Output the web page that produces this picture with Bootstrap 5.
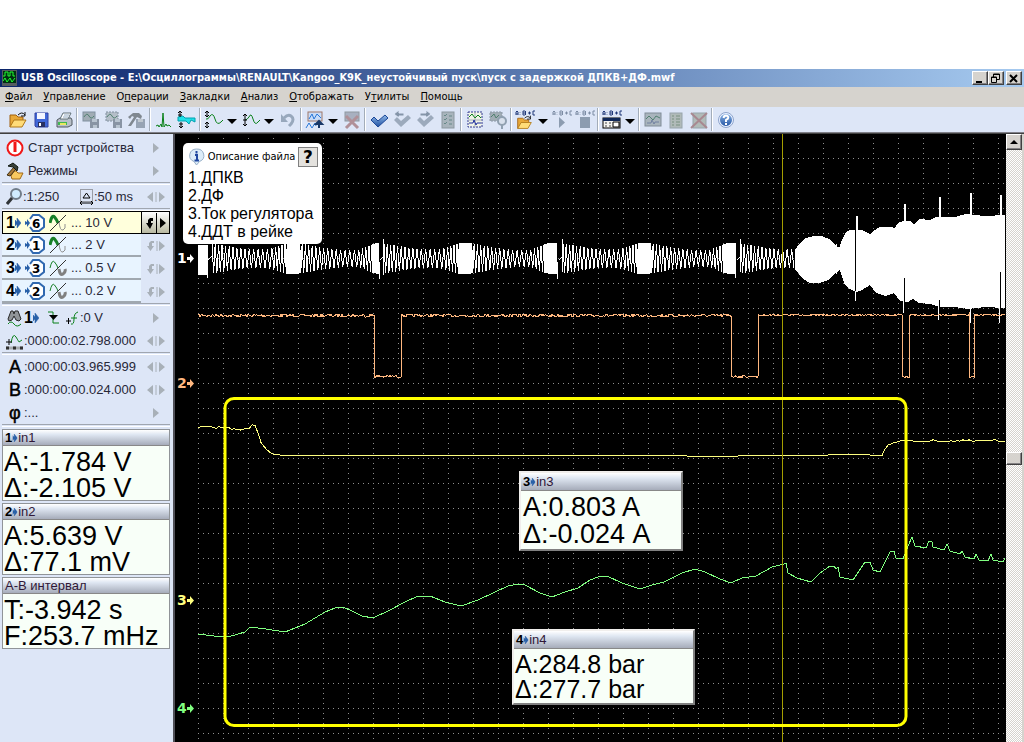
<!DOCTYPE html>
<html lang="ru">
<head>
<meta charset="utf-8">
<meta name="viewport" content="width=device-width, initial-scale=1">
<title>USB Oscilloscope</title>
<link href="https://cdn.jsdelivr.net/npm/bootstrap@5.3.0/dist/css/bootstrap.min.css" rel="stylesheet">
<style>
  :root { --face:#d6d3ce; --pane:#dde6f7; --ui:"DejaVu Sans Condensed","DejaVu Sans",sans-serif; }
  body { background:#fff; font:11px/14px var(--ui); color:#000; overflow:hidden; }
  button { border:0; background:none; padding:0; color:inherit; font:inherit; }
  svg { display:block; flex:none; }
  .app { height:100vh; padding-top:69px; }
  .titlebar { height:18px; background:linear-gradient(90deg,#0a246a,#a6caf0); color:#fff; padding:0 2px; }
  .titlebar h1 { font:bold 11px/18px var(--ui); margin:0; white-space:nowrap; overflow:hidden; }
  .winbtn { width:16px; height:14px; background:var(--face); border:1px solid; border-color:#fff #404040 #404040 #fff; box-shadow:inset -1px -1px #848284; }
  .winbtn-close { margin-left:2px; }
  .menubar { height:20px; background:var(--face); padding-left:5px; gap:11px; }
  .menubar button { line-height:20px; }
  .tools { height:25px; background:var(--pane); padding-left:6px; }
  .tools button { width:23px; height:25px; display:flex; align-items:center; justify-content:center; }
  .tools button.drop { width:14px; }
  .vsep { width:2px; height:23px; margin:0 1px; background:#a3adb9; border-right:1px solid #fff; flex:none; }
  .edge { height:2px; background:#808088; border-bottom:1px solid #404040; }
  .side { width:175px; flex:none; background:var(--pane); border-right:2px solid #505058; padding:2px 3px 0 2px; font:13px/23px "Liberation Sans",sans-serif; color:#282838; }
  .line-item { height:23px; }
  .line-item .main { text-align:left; white-space:nowrap; height:23px; }
  .nudge { width:29px; flex:none; display:flex; align-items:center; justify-content:center; }
  .hsep { height:3px; border-top:1px solid #a0a6b0; border-bottom:1px solid #fff; background:var(--pane); }
  .hsep-last { margin-bottom:2px; }
  .chan .main { width:139px; background:#e8f4ff; border-bottom:2px solid #a0a8b0; padding-left:4px; }
  .chan.active .main { background:#ffffdc; border:1px solid #000; border-right:0; padding-left:3px; }
  .chan.active .nudge { background:linear-gradient(#fff,#b8b8a0); border:1px solid #000; height:23px; }
  .num { font:bold 16px/20px "Liberation Sans",sans-serif; color:#000; }
  .big { font:18px/22px "Liberation Sans",sans-serif; color:#000; -webkit-text-stroke:.5px #000; width:18px; padding-left:3px; }
  .meter { background:#f8fff8; border:1px solid #909498; color:#000; margin-bottom:2px; }
  .meter header { height:16px; background:linear-gradient(#fff,#dfe7f2 30%,#a6acba); border-bottom:1px solid #888; font:13px/15px "Liberation Sans",sans-serif; color:#301838; padding-left:2px; display:flex; align-items:center; }
  .meter header b { color:#000; }
  .meter .vals { font:27px/26px "Liberation Sans",sans-serif; padding:3px 0 0 1px; white-space:nowrap; height:54px; }
  .float-box { position:absolute; border:2px solid; border-color:#f0eeec #808080 #808080 #f0eeec; margin:0; }
  .float-box header { height:18px; line-height:17px; }
  .in3 { left:344px; top:337px; width:164px; height:80px; }
  .in3 .vals { line-height:27px; padding-top:3px; padding-left:2px; }
  .in4 { left:337px; top:495px; width:183px; height:76px; }
  .in4 .vals { font-size:25px; line-height:25px; }
  .scope { background:#000; }
  .plot { position:absolute; inset:0; width:100%; height:100%; }
  .tag { position:absolute; left:2px; height:14px; font:bold 14px/14px "DejaVu Sans",sans-serif; display:flex; align-items:center; }
  .tag1 { top:117px; color:#fff; }
  .tag2 { top:242px; color:#ffb880; }
  .tag3 { top:459px; color:#ffff80; }
  .tag4 { top:567px; color:#80ff80; }
  .note { position:absolute; left:8px; top:9px; width:139px; height:101px; background:#fff; border-radius:5px; padding:4px 4px 0 5px; }
  .note ol { list-style:none; margin:2px 0 0; padding:0; font:16px/18px "Liberation Sans",sans-serif; white-space:nowrap; }
  .ask { width:20px; height:20px; border:1px solid #808080; background:#e4e2de; font:bold 17px/17px "DejaVu Sans",sans-serif; text-align:center; }
  .track { width:16px; flex:none; background:repeating-conic-gradient(#d6d3ce 0 25%,#fff 0 50%) 0 0/2px 2px; }
  .track button { width:16px; height:16px; background:var(--face); border:1px solid; border-color:#fff #404040 #404040 #fff; box-shadow:inset -1px -1px #848284; display:flex; align-items:center; justify-content:center; }
  .thumb { position:absolute; left:0; top:318px; }
  .track button.thumb { height:13px; }
  .rim { width:2px; flex:none; background:var(--face); }
</style>
</head>
<body>
<svg width="0" height="0" class="position-absolute" aria-hidden="true">
  <defs>
    <linearGradient id="blue" x1="0" y1="0" x2="0" y2="1"><stop offset="0" stop-color="#8fb8e8"/><stop offset="1" stop-color="#1f50a0"/></linearGradient>
    <symbol id="tri" viewBox="0 0 10 5"><path d="M0 0H10L5 5Z"/></symbol>
    <symbol id="arr" viewBox="0 0 6 10"><path d="M0 2l2 2V0l4 5-4 5V6l-2 2z" fill="#2860a8" stroke="#2860a8" stroke-width=".5"/></symbol>
    <symbol id="right" viewBox="0 0 6 10"><path d="M0 0L6 5L0 10Z" fill="#a8b0b8"/></symbol>
    <symbol id="both" viewBox="0 0 18 10"><path d="M6 0L0 5L6 10ZM12 0L18 5L12 10Z" fill="#a8b0b8"/><path d="M9 0V10" stroke="#a8b0b8"/></symbol>
    <symbol id="jump" viewBox="0 0 18 10"><path d="M7 0H4L2 2V5H0L3.500 10L7 5H5V2H7ZM12 0L18 5L12 10Z" fill="#a8b0b8"/><path d="M10 0V10" stroke="#a8b0b8"/></symbol>
    <symbol id="folder" viewBox="0 0 20 20"><path d="M2 17V5H8L10 7H15V10" fill="#e8a838" stroke="#a06010"/><path d="M2 17L6 10H18L14 17Z" fill="#ffdc78" stroke="#b07818"/><path d="M10 5Q14 1 17 5M17 2V6H13" fill="none" stroke="#111"/></symbol>
    <symbol id="check" viewBox="0 0 20 20"><path d="M2 10L5 7L9 11L16 5L19 8L9 17Z"/></symbol>
    <symbol id="abc" viewBox="0 0 20 6"><path d="M1 5V2L2 1L3 2V5M1 4H3M5 2V2.500M5 4V4.500M8 1V5H10L11 4L10 3H8M10 3L11 2L10 1H8M13 3H16M14.500 1.500V4.500M20 1H18V5H20" fill="none" stroke="currentColor"/></symbol>
    <symbol id="wavehi" viewBox="0 0 18 18"><path d="M1 9Q3 0 5.500 3T9 9" fill="none" stroke="#188028" stroke-width="3"/><path d="M10 8Q11 17 14 16T16 10" fill="none" stroke="#909090"/><path d="M1 17L17 1" stroke="#333"/></symbol>
    <symbol id="wavelo" viewBox="0 0 18 18"><path d="M1 9Q3 0 5.500 3T9 9" fill="none" stroke="#188028"/><path d="M10 10Q11 17 14 15T16 10" fill="none" stroke="#808080" stroke-width="3"/><path d="M1 17L17 1" stroke="#333"/></symbol>
    <symbol id="oct" viewBox="0 0 20 18"><path d="M5 5L8 1H14L19 5V13L14 17H8L5 13" fill="#fff" stroke="#3068b0" stroke-width="2"/><path d="M0 7L2 8V5L5 9L2 13V10L0 11Z" fill="#2860a8"/></symbol>
  </defs>
</svg>

<main class="app d-flex flex-column">
  <div class="titlebar d-flex align-items-center gap-1">
    <svg width="15" height="16" viewBox="0 0 15 16"><rect width="15" height="16" fill="#555c60"/><rect x="1" y="1" width="13" height="12" fill="#003010"/><path d="M1 6H3V2H6V6H8V2H11V6H13M1 11L3 8L5 12L8 8L10 12L13 8" fill="none" stroke="#20ff30"/></svg>
    <h1 class="flex-grow-1">USB Oscilloscope - E:\Осциллограммы\RENAULT\Kangoo_K9K_неустойчивый пуск\пуск с задержкой ДПКВ+ДФ.mwf</h1>
    <div class="d-flex">
      <button class="winbtn" aria-label="Свернуть"><svg width="13" height="11"><rect x="3" y="8" width="6" height="2"/></svg></button>
      <button class="winbtn" aria-label="Восстановить"><svg width="13" height="11"><path d="M4.500 4V1H10.500V6.500H8M4 1.500H11M2.500 4V9.500H7.500V4ZM2 4.500H8" fill="none" stroke="#000"/></svg></button>
      <button class="winbtn winbtn-close" aria-label="Закрыть"><svg width="13" height="11"><path d="M3 2L10 9M10 2L3 9" stroke="#000" stroke-width="2"/></svg></button>
    </div>
  </div>

  <nav class="menubar d-flex" aria-label="Меню">
    <button><u>Ф</u>айл</button><button><u>У</u>правление</button><button>О<u>п</u>ерации</button><button><u>З</u>акладки</button><button><u>А</u>нализ</button><button><u>О</u>тображать</button><button>У<u>т</u>илиты</button><button><u>П</u>омощь</button>
  </nav>

  <div class="tools d-flex align-items-center" role="toolbar" aria-label="Инструменты">
    <button aria-label="Открыть"><svg width="20" height="20"><use href="#folder"/></svg></button>
    <button aria-label="Сохранить"><svg width="20" height="20"><path d="M4 3H17V17H5L4 16Z" fill="#4068d8" stroke="#3040a0"/><rect x="6" y="3" width="8" height="6" fill="#f4f6ff"/><rect x="7" y="12" width="7" height="5" fill="#283060"/><rect x="8" y="13" width="2" height="3" fill="#fff"/></svg></button>
    <button aria-label="Печать"><svg width="20" height="20"><path d="M3 10L6 8H17L18 10V15L14 17H3Z" fill="#b8c0c8" stroke="#505860"/><path d="M6 9L9 3H17L14 9Z" fill="#fff" stroke="#607078"/><path d="M9 7H14M10 5H15" stroke="#90a8c0"/><path d="M4 12H13V15H4Z" fill="#40b850"/><path d="M6 13H12V15H6Z" fill="#e8e860"/></svg></button>
    <span class="vsep"></span>
    <button aria-label="Сохранить сигнал" disabled><svg width="20" height="20"><rect x="2" y="2" width="12" height="9" fill="#a0acb4" stroke="#8090a0"/><path d="M3 7Q6 2 8 6T13 6" fill="none" stroke="#508070"/><rect x="9" y="9" width="9" height="9" fill="#8894a4"/><path d="M11 9H16V12H11ZM12 15H16V18H12Z" fill="#b8c4d0"/></svg></button>
    <button aria-label="Сохранить фрагмент" disabled><svg width="20" height="20"><rect x="2" y="2" width="12" height="9" fill="#b4bec8" stroke="#8090a0" stroke-dasharray="2 1"/><path d="M3 7Q6 2 8 6T13 6" fill="none" stroke="#508070"/><rect x="9" y="9" width="9" height="9" fill="#8894a4"/><path d="M11 9H16V12H11ZM12 15H16V18H12Z" fill="#b8c4d0"/></svg></button>
    <button aria-label="Настройки сохранения" disabled><svg width="20" height="20"><path d="M1 7L6 3H12L15 6L14 9L10 7L4 16H1L7 7L5 6L3 9Z" fill="#808890"/><rect x="9" y="9" width="9" height="9" fill="#98a4b4"/><path d="M11 9H16V12H11Z" fill="#c0c8d0"/></svg></button>
    <span class="vsep"></span>
    <button aria-label="Спектр"><svg width="20" height="20"><path d="M2 16L4 15L5 17L7 14L8 17L9 3L10 17L12 14L13 16L15 15L17 17" fill="none" stroke="#088018"/></svg></button>
    <button aria-label="Диапазон"><svg width="20" height="20"><path d="M1 7L6 6L8 8H18V12L14 10L12 14L9 11H1Z" fill="#20e0e8" stroke="#00a0b0"/><path d="M3 1V7M1 3L3 1L5 3M1 5H5M4 12V18M2 14H6M2 16L4 18L6 16" fill="none" stroke="#000"/></svg></button>
    <span class="vsep"></span>
    <button aria-label="Масштаб по вертикали"><svg width="20" height="20"><path d="M2 9Q4 10 6 6Q9 2 11 9T17 12L19 10" fill="none" stroke="#088018"/><path d="M3 1V7M1 3L3 1L5 3M1 5L3 7L5 5M3 12V18M1 14L3 12L5 14M1 16L3 18L5 16" fill="none" stroke="#000"/></svg></button>
    <button class="drop" aria-label="Варианты масштаба"><svg width="10" height="5" class="mt-1"><use href="#tri"/></svg></button>
    <button aria-label="Смещение"><svg width="20" height="20"><path d="M4 10Q6 10 8 7Q10 2 12 9T17 12L19 10" fill="none" stroke="#088018"/><path d="M4 4V10M2 6L4 4L6 6M4 10V16M2 14L4 16L6 14M2 10H6" fill="none" stroke="#000"/></svg></button>
    <button class="drop" aria-label="Варианты смещения"><svg width="10" height="5" class="mt-1"><use href="#tri"/></svg></button>
    <button aria-label="Отменить" disabled><svg width="20" height="20"><path d="M6 8Q10 4 13 6Q17 9 13 14L11 16" fill="none" stroke="#98a8bc" stroke-width="3"/><path d="M3 4V12H10Z" fill="#98a8bc"/></svg></button>
    <span class="vsep"></span>
    <button aria-label="Вид"><svg width="20" height="20"><rect x="3" y="2" width="14" height="9" fill="#c8dcf8" stroke="#a07868"/><path d="M4 9L7 4L9 9L12 4L16 8" fill="none" stroke="#2878d8"/><path d="M1 18L4 13L7 18L10 13L11 16" fill="none" stroke="#2878d8"/><path d="M14 18V12M11 14L14 11L17 14Z" fill="#183868" stroke="#183868" stroke-width="2"/></svg></button>
    <button class="drop" aria-label="Варианты вида"><svg width="10" height="5" class="mt-1"><use href="#tri"/></svg></button>
    <button aria-label="Убрать вид" disabled><svg width="20" height="20"><rect x="3" y="2" width="14" height="9" fill="#a8b0c0" stroke="#9098a0"/><path d="M4 6L16 18M16 6L4 18" stroke="#b09098" stroke-width="3"/></svg></button>
    <span class="vsep"></span>
    <button aria-label="Закладка"><svg width="20" height="20" fill="url(#blue)" stroke="#1c4898"><use href="#check"/></svg></button>
    <button aria-label="Предыдущая закладка" disabled><svg width="20" height="20" fill="#9caabc"><use href="#check"/><path d="M2 4L7 0V3H12V6H7V8Z" fill="#8494a8" stroke="#dde6f7"/></svg></button>
    <button aria-label="Следующая закладка" disabled><svg width="20" height="20" fill="#9caabc"><use href="#check"/><path d="M16 4L11 0V3H5V6H11V8Z" fill="#8494a8" stroke="#dde6f7"/></svg></button>
    <button aria-label="Список закладок" disabled><svg width="20" height="20"><rect x="4" y="2" width="12" height="16" fill="#a8b4bc" stroke="#8c98a0"/><path d="M6 5L7 6L9 4M6 9L7 10L9 8M6 13L7 14L9 12M11 6H14M11 10H14M11 14H14" fill="none" stroke="#688"/></svg></button>
    <span class="vsep"></span>
    <button aria-label="Выделить"><svg width="20" height="20"><rect x="3" y="2" width="14" height="15" fill="#f0f4e8" stroke="#303890" stroke-dasharray="2 1"/><path d="M3 10H17M10 2V17" stroke="#a8b0b8"/><path d="M4 7L7 4L10 8L13 5L16 8" fill="none" stroke="#088018"/><path d="M4 13H8L9 10L11 15L12 13H16" fill="none" stroke="#2030a0"/></svg></button>
    <button aria-label="Увеличить выделение" disabled><svg width="20" height="20"><rect x="2" y="2" width="12" height="9" fill="#a0acb4" stroke="#8c98a8" stroke-dasharray="2 1"/><path d="M3 7L6 4L8 8L11 5" fill="none" stroke="#508070"/><circle cx="14" cy="11" r="4" fill="#d8e0ec" stroke="#90a0b0" stroke-width="2"/><path d="M14 15V19" stroke="#90a0b0" stroke-width="2"/></svg></button>
    <span class="vsep"></span>
    <button aria-label="Открыть сценарий"><svg width="20" height="20"><use href="#abc" width="20" height="6" color="#203878"/><svg x="1" y="4" width="17" height="17"><use href="#folder" width="17" height="17"/></svg></svg></button>
    <button class="drop" aria-label="Недавние сценарии"><svg width="10" height="5" class="mt-1"><use href="#tri"/></svg></button>
    <button aria-label="Запустить сценарий" disabled><svg width="20" height="20"><use href="#abc" width="20" height="6" color="#7c8ca4"/><path d="M7 7V18L13 12.500Z" fill="#8c9cb0"/></svg></button>
    <button aria-label="Остановить сценарий" disabled><svg width="20" height="20"><use href="#abc" width="20" height="6" color="#7c8ca4"/><rect x="5" y="7" width="10" height="11" fill="#8c9cb0"/></svg></button>
    <span class="vsep"></span>
    <button aria-label="Окна анализа"><svg width="20" height="20"><use href="#abc" width="20" height="6" color="#203878"/><rect x="1" y="8" width="17" height="10" fill="#f4f4f0" stroke="#000"/><path d="M1 9.500H18" stroke="#102858" stroke-width="3"/><path d="M3 13H5M7 13H9M3 16H5M7 16H9" stroke="#444"/><path d="M11 12H17V17H11Z" fill="#fff" stroke="#000"/></svg></button>
    <button class="drop" aria-label="Список окон"><svg width="10" height="5" class="mt-1"><use href="#tri"/></svg></button>
    <span class="vsep"></span>
    <button aria-label="Отчёт" disabled><svg width="20" height="20"><rect x="2" y="3" width="16" height="13" fill="#a8b4bc" stroke="#808c98"/><path d="M3 9L6 6L10 10L13 6L17 8" fill="none" stroke="#508070"/><path d="M4 13H8L9 10L11 14L12 12H16" fill="none" stroke="#7080a0"/></svg></button>
    <button aria-label="Страница" disabled><svg width="20" height="20"><rect x="4" y="3" width="12" height="15" fill="#b0bab8" stroke="#98a4ac"/><path d="M6 6H8M6 9H8M6 12H8M6 15H8M10 6H14M10 9H14M10 12H14M10 15H14" stroke="#789080"/></svg></button>
    <button aria-label="Удалить отчёт" disabled><svg width="20" height="20"><rect x="4" y="3" width="13" height="15" fill="#b0bab8" stroke="#98a4ac"/><path d="M2 3L18 18M18 3L2 18" stroke="#a88890" stroke-width="2"/></svg></button>
    <span class="vsep"></span>
    <button aria-label="Справка"><svg width="20" height="20"><circle cx="10" cy="10" r="7" fill="url(#blue)" stroke="#e8f0ff" stroke-width="2"/><circle cx="10" cy="10" r="7.500" fill="none" stroke="#5070a8" stroke-width=".6"/><path d="M7.500 8Q8 5.500 10 5.500Q13 6 12 8.500L10 10V12M10 13V15" fill="none" stroke="#fff" stroke-width="2"/></svg></button>
  </div>
  <div class="edge"></div>

  <div class="d-flex flex-grow-1">
    <aside class="side">
      <div class="line-item d-flex"><button class="main d-flex flex-grow-1 align-items-center gap-1 ps-1"><svg width="18" height="18"><circle cx="9" cy="9" r="7.500" fill="#fff" stroke="#f01818" stroke-width="2"/><path d="M9 3V13" stroke="#f01818" stroke-width="3"/></svg><span>Старт устройства</span></button><button class="nudge" aria-label="Подменю запуска"><svg width="6" height="10"><use href="#right"/></svg></button></div>
      <div class="line-item d-flex"><button class="main d-flex flex-grow-1 align-items-center gap-1 ps-1"><svg width="18" height="18"><path d="M5 14L8 9H10L12 11H17L14 17H6Z" fill="#f8c860" stroke="#a06818"/><path d="M1 13L8 5L10 7L4 14Z" fill="#a87838" stroke="#403010"/><path d="M2 4L7 1L12 5L11 9L7 5Z" fill="#384038" stroke="#101810"/></svg><span>Режимы</span></button><button class="nudge" aria-label="Подменю режимов"><svg width="6" height="10"><use href="#right"/></svg></button></div>
      <div class="hsep"></div>
      <div class="line-item d-flex"><button class="main d-flex align-items-center flex-grow-1 ps-1"><svg width="17" height="17"><circle cx="10" cy="6" r="5" fill="#d0ecff" stroke="#707c88" stroke-width="2"/><path d="M6 10L1 16" stroke="#303438" stroke-width="3"/></svg><span>:1:250</span><svg width="15" height="17" class="ms-auto"><rect x="1.500" y="1.500" width="12" height="12" fill="none" stroke="#555" stroke-dasharray="1 1"/><path d="M4 10L7.500 5L11 10ZM1 15H14M3 13L1 15L3 17M12 13L14 15L12 17" fill="none" stroke="#000"/></svg><span class="pe-2">:50 ms</span></button><button class="nudge" aria-label="Изменить развёртку"><svg width="18" height="10"><use href="#both"/></svg></button></div>
      <div class="hsep"></div>
      <div class="line-item chan active d-flex"><button class="main d-flex align-items-center"><span class="num">1</span><svg width="6" height="10"><use href="#arr"/></svg><svg width="20" height="18" class="ms-1"><use href="#oct"/><text x="7" y="14" font-family="DejaVu Sans" font-weight="bold" font-size="12">6</text></svg><svg width="18" height="18" class="ms-1"><use href="#wavehi"/></svg><span class="ms-1">... 10 V</span></button><button class="nudge" aria-label="Чувствительность канала 1"><svg width="24" height="20" viewBox="0 0 24 20"><path d="M9 5H6L4 7V10H2L6 16L9 10H7V8H9ZM16 5L22 10L16 15Z"/><path d="M12.500 0V20" stroke="#000"/></svg></button></div>
      <div class="line-item chan d-flex"><button class="main d-flex align-items-center"><span class="num">2</span><svg width="6" height="10"><use href="#arr"/></svg><svg width="20" height="18" class="ms-1"><use href="#oct"/><text x="7" y="14" font-family="DejaVu Sans" font-weight="bold" font-size="12">1</text></svg><svg width="18" height="18" class="ms-1"><use href="#wavehi"/></svg><span class="ms-1">... 2 V</span></button><button class="nudge" aria-label="Чувствительность канала 2"><svg width="18" height="10"><use href="#jump"/></svg></button></div>
      <div class="line-item chan d-flex"><button class="main d-flex align-items-center"><span class="num">3</span><svg width="6" height="10"><use href="#arr"/></svg><svg width="20" height="18" class="ms-1"><use href="#oct"/><text x="7" y="14" font-family="DejaVu Sans" font-weight="bold" font-size="12">3</text></svg><svg width="18" height="18" class="ms-1"><use href="#wavelo"/></svg><span class="ms-1">... 0.5 V</span></button><button class="nudge" aria-label="Чувствительность канала 3"><svg width="18" height="10"><use href="#jump"/></svg></button></div>
      <div class="line-item chan d-flex"><button class="main d-flex align-items-center"><span class="num">4</span><svg width="6" height="10"><use href="#arr"/></svg><svg width="20" height="18" class="ms-1"><use href="#oct"/><text x="7" y="14" font-family="DejaVu Sans" font-weight="bold" font-size="12">2</text></svg><svg width="18" height="18" class="ms-1"><use href="#wavelo"/></svg><span class="ms-1">... 0.2 V</span></button><button class="nudge" aria-label="Чувствительность канала 4"><svg width="18" height="10"><use href="#jump"/></svg></button></div>
      <div class="hsep"></div>
      <div class="line-item d-flex"><button class="main d-flex align-items-center flex-grow-1 ps-1"><svg width="18" height="18"><path d="M2 10L5 2H7L8 5L9 2H12L15 10L13 12L10 11L8 7L6 11L3 12Z" fill="#909498" stroke="#282828"/><path d="M2 15Q5 11 8 15T15 15" fill="none" stroke="#088018"/></svg><span class="num">1</span><svg width="6" height="10"><use href="#arr"/></svg><svg width="14" height="14" class="ms-2"><path d="M1 1H6V12H12" fill="none" stroke="#088018"/><path d="M2 4H11L6.500 9Z"/></svg><svg width="15" height="16" class="ms-1"><path d="M6 14Q9 15 9 9T13 2M6 8H12" fill="none" stroke="#088018"/><path d="M1 11H6M3.500 8V14" stroke="#000"/></svg><span>:0 V</span></button><button class="nudge" aria-label="Настройка синхронизации"><svg width="6" height="10"><use href="#right"/></svg></button></div>
      <div class="line-item d-flex"><button class="main d-flex align-items-center flex-grow-1 ps-1"><svg width="18" height="18"><path d="M5 11Q7 0 10 5T13 10L16 8" fill="none" stroke="#088018"/><path d="M0 10H6M3 7V13" stroke="#000"/><path d="M0 16H17" stroke="#a8acb0" stroke-width="3"/><path d="M0 16H3M7 16H10M14 16H17" stroke="#303030" stroke-width="3"/></svg><span>:000:00:02.798.000</span></button><button class="nudge" aria-label="Сдвиг по времени"><svg width="18" height="10"><use href="#both"/></svg></button></div>
      <div class="hsep"></div>
      <div class="line-item d-flex"><button class="main d-flex align-items-center flex-grow-1 ps-1"><span class="big">A</span><span>:000:00:03.965.999</span></button><button class="nudge" aria-label="Сдвиг маркера A"><svg width="18" height="10"><use href="#both"/></svg></button></div>
      <div class="line-item d-flex"><button class="main d-flex align-items-center flex-grow-1 ps-1"><span class="big">B</span><span>:000:00:00.024.000</span></button><button class="nudge" aria-label="Сдвиг маркера B"><svg width="18" height="10"><use href="#both"/></svg></button></div>
      <div class="line-item d-flex"><button class="main d-flex align-items-center flex-grow-1 ps-1"><span class="big">φ</span><span>:...</span></button><button class="nudge" aria-label="Фаза"><svg width="6" height="10"><use href="#right"/></svg></button></div>
      <div class="hsep hsep-last"></div>
      <section class="meter"><header><b>1</b><svg width="6" height="8" viewBox="0 0 6 10"><use href="#arr"/></svg>in1</header><div class="vals">A:-1.784 V<br>Δ:-2.105 V</div></section>
      <section class="meter"><header><b>2</b><svg width="6" height="8" viewBox="0 0 6 10"><use href="#arr"/></svg>in2</header><div class="vals">A:5.639 V<br>Δ:77.1 mV</div></section>
      <section class="meter"><header>А-В интервал</header><div class="vals">T:-3.942 s<br>F:253.7 mHz</div></section>
    </aside>

    <section class="scope position-relative flex-grow-1 overflow-hidden" aria-label="Осциллограмма">
      <svg class="plot" aria-hidden="true">
        <defs>
          <pattern id="dotsV" patternUnits="userSpaceOnUse" x="198" y="133" width="25" height="5"><rect width="1" height="1" fill="#909090"/></pattern>
          <pattern id="dotsH" patternUnits="userSpaceOnUse" x="198" y="133" width="5" height="25"><rect width="1" height="1" fill="#909090"/></pattern>
        </defs>
        <g transform="translate(-175 -134)" fill="none" shape-rendering="crispEdges">
          <rect x="198" y="134" width="808" height="608" fill="url(#dotsV)"/>
          <rect x="198" y="134" width="808" height="608" fill="url(#dotsH)"/>
          <path id="ch1" stroke="#fff"/>
          <path id="ch1body" fill="#fff"/>
          <path d="M207.500 262V278M379.500 262V279M383.500 239V275M557.500 262V279M562.500 239V272M735.500 262V278M740.500 239V272M855.500 285V301M903.500 290V313M938.500 300V320M970.500 300V323M999.500 300V323" stroke="#fff"/>
          <path d="M857 216V240M905 204V230M940 197V230M971 193V230M1000.500 195V230" stroke="#fff" stroke-width="2"/>
          <path d="M855.500 229V291M904.500 278V304M939.500 300V307M1000.500 272V310" stroke="#000"/>
          <path id="ch2" stroke="#ffb880"/>
          <path id="ch3" stroke="#ffff80"/>
          <path id="ch4" stroke="#80ff80"/>
          <path d="M782.500 134V742" stroke="#a59e00"/>
          <rect x="225" y="398.500" width="681" height="327" rx="9" stroke="#ff0" stroke-width="3" shape-rendering="auto"/>
        </g>
      </svg>
      <span class="tag tag1">1<svg width="7" height="9" fill="currentColor"><path d="M0 3H3V0L7 4.500L3 9V6H0Z"/></svg></span>
      <span class="tag tag2">2<svg width="7" height="9" fill="currentColor"><path d="M0 3H3V0L7 4.500L3 9V6H0Z"/></svg></span>
      <span class="tag tag3">3<svg width="7" height="9" fill="currentColor"><path d="M0 3H3V0L7 4.500L3 9V6H0Z"/></svg></span>
      <span class="tag tag4">4<svg width="7" height="9" fill="currentColor"><path d="M0 3H3V0L7 4.500L3 9V6H0Z"/></svg></span>

      <div class="note">
        <div class="d-flex align-items-center justify-content-between">
          <svg width="17" height="18"><path d="M8.500 1a7 6.500 0 0 1 3 12.500L8.500 17L6 13.500A7 6.500 0 0 1 8.500 1Z" fill="#dcecf8" stroke="#98b0c8"/><path d="M8.500 3V5.500M7 7H9V12M6.500 12.500H11" fill="none" stroke="#2048a0" stroke-width="2"/></svg>
          <span>Описание файла</span>
          <button class="ask" aria-label="Подсказка">?</button>
        </div>
        <ol><li>1.ДПКВ</li><li>2.ДФ</li><li>3.Ток регулятора</li><li>4.ДДТ в рейке</li></ol>
      </div>
      <section class="meter float-box in3"><header><b>3</b><svg width="6" height="8" viewBox="0 0 6 10"><use href="#arr"/></svg>in3</header><div class="vals">A:0.803 A<br>Δ:-0.024 A</div></section>
      <section class="meter float-box in4"><header><b>4</b><svg width="6" height="8" viewBox="0 0 6 10"><use href="#arr"/></svg>in4</header><div class="vals">A:284.8 bar<br>Δ:277.7 bar</div></section>
    </section>
    <div class="track position-relative">
      <button aria-label="Вверх"><svg width="8" height="4"><path d="M4 0L8 4H0Z"/></svg></button>
      <button class="thumb" aria-label="Ползунок"></button>
    </div>
    <div class="rim"></div>
  </div>
</main>

<script src="https://cdn.jsdelivr.net/npm/bootstrap@5.3.0/dist/js/bootstrap.bundle.min.js"></script>
<script>
(() => {
  const put = (id, d) => document.getElementById(id).setAttribute('d', d);
  let seed = 7;
  const rnd = () => (seed = (seed * 16807) % 2147483647) / 2147483647;
  // Linear interpolation through [x, value] knots
  const at = (k, x) => {
    let i = 1;
    while (i < k.length - 1 && k[i][0] < x) i++;
    const [a, b] = [k[i - 1], k[i]];
    return a[1] + (b[1] - a[1]) * Math.min(1, Math.max(0, (x - a[0]) / (b[0] - a[0])));
  };

  // Channel 1: crank sensor, one swell between teeth and one ahead of each gap
  let d = '';
  const amp = [[0,15],[12,13],[30,10],[50,9],[62,11],[74,15],[88,15],[110,11],[135,8],[148,9],[160,14],[166,15.5],[173,15.5]];
  const step = [[0,1.6],[25,2],[55,2.4],[64,1.6],[72,1.5],[76,.5],[86,.5],[90,1.6],[110,2],[140,2.4],[150,1.7],[158,1.5],[160,.5],[173,.5]];
  for (const [s, end] of [[212, 379], [384, 557], [563, 736], [741, 795]]) {
    let up = true;
    d += `M${s - 4} 260L${s} 256`;
    for (let x = s; x < end; x += at(step, x - s)) { d += `L${x.toFixed(1)} ${(258.5 + (up ? -1 : 1) * at(amp, x - s)).toFixed(1)}`; up = !up; }
  }
  d += 'M836.500 244V274M838.500 247V270M840.500 249V270M842.500 240V278';
  put('ch1', d);
  const upper = [[795,250],[800,243],[806,238],[814,236],[822,236],[829,239],[833,243],[838,247],[839,249],[842,240],[846,232],[850,230],[862,230],[866,232],[870,234],[875,230],[880,227],[890,227],[895,228],[898,223],[903,221],[910,221],[914,224],[919,219],[930,220],[936,217],[945,217],[955,217],[966,214],[985,216],[1005,215]];
  const lower = [[1005,308],[985,307],[968,309],[955,307],[940,307],[930,304],[919,303],[913,299],[908,302],[900,301],[894,293],[885,296],[876,293],[870,285],[862,290],[856,292],[848,288],[844,283],[840,270],[836,273],[828,280],[820,283],[810,283],[803,279],[795,269]];
  put('ch1body', 'M' + [...upper, ...lower].map(p => p.join(' ')).join('L') + 'ZM198 245H208V275H198Z');

  // Channel 2: camshaft sensor
  d = 'M198 315';
  const flat = (a, b, y, n) => { for (let x = a; x <= b; x++) d += `L${x} ${(y + (rnd() - .5) * n).toFixed(1)}`; };
  flat(199, 374, 315.5, 3); flat(374, 401, 376.5, 3); flat(401, 731, 315.5, 3);
  flat(731, 758, 376.5, 2); flat(758, 902, 315, 2); flat(902, 909, 377, 1); flat(909, 969, 315, 2); flat(969, 974, 377, 1); flat(974, 1005, 315, 2);
  put('ch2', d);

  // Channel 3: regulator current
  const c3 = [[198,427],[224,427.5],[240,429],[249,429],[251,424.5],[257,426],[259,440],[266,449],[272,454],[284,455.5],[731,456],[820,455.5],[845,454],[870,455],[883,455.5],[886,446],[893,443],[900,441],[1006,441]];
  d = 'M198 427.500';
  for (let x = 201; x < 1006; x += 3) d += `L${x} ${(at(c3, x) + (x < 250 || x > 900 ? rnd() * 2.4 - 1.2 : 0)).toFixed(1)}`;
  put('ch3', d);

  // Channel 4: rail pressure
  put('ch4', 'M198 634L214 636L228 637L245 632L250 627L266 629L285 632L305 624L325 612L335 608L343 607L352 611L362 616L373 618L390 610L405 602L418 596L430 596L445 602L461 606L478 600L495 592L508 586L518 584L525 585L540 593L552 597L565 592L578 588L590 580L598 577L607 576L622 583L640 589L652 585L664 582L682 573L695 569L705 572L720 579L731 583L742 578L756 576L772 567L784 564L786 563L788 573L797 578L811 582L820 573L830 566L834 566L836 569L838 567L840 577L853 580L865 562L870 562L873 570L880 572L890 552L894 551L896 558L903 559L908 546L912 537L915 546L926 548L929 541L932 542L933 547L944 550L947 544L950 551L960 554L962 551L965 557L974 559L976 554L979 560L988 561L991 554L993 560L1003 562L1005 558');
})();
</script>
</body>
</html>
